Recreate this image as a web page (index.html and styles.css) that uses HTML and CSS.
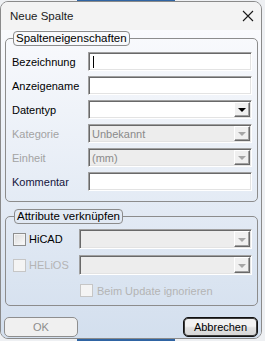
FILE: index.html
```html
<!DOCTYPE html>
<html lang="de">
<head>
  <meta charset="UTF-8" />
  <title>Neue Spalte</title>
  <link rel="stylesheet" href="styles.css">
</head>
<body>
  <div class="dialog">
    <div class="titlebar">
      <span class="title">Neue Spalte</span>
      <svg class="close" width="12" height="12" viewBox="0 0 12 12">
        <path d="M1 1 L11 11 M11 1 L1 11" stroke="#1a1a1a" stroke-width="1.1" fill="none" />
      </svg>
    </div>

    <div class="client">
      <fieldset class="group props">
        <legend>Spalteneigenschaften</legend>

        <label>Bezeichnung</label>
        <div class="field"><span class="caret"></span></div>

        <label>Anzeigename</label>
        <div class="field"></div>

        <label>Datentyp</label>
        <div class="field combo"><span class="drop"><i></i></span></div>

        <label class="off">Kategorie</label>
        <div class="field combo disabled"><span class="value">Unbekannt</span><span class="drop"><i></i></span></div>

        <label class="off">Einheit</label>
        <div class="field combo disabled"><span class="value">(mm)</span><span class="drop"><i></i></span></div>

        <label class="note">Kommentar</label>
        <div class="field"></div>
      </fieldset>

      <fieldset class="group links">
        <legend>Attribute verknüpfen</legend>

        <label class="check"><span class="box"></span>HiCAD</label>
        <div class="field combo disabled"><span class="drop"><i></i></span></div>

        <label class="check off"><span class="box"></span>HELiOS</label>
        <div class="field combo disabled"><span class="drop"><i></i></span></div>

        <label class="check off update"><span class="box"></span>Beim Update ignorieren</label>
      </fieldset>

      <div class="buttons">
        <button class="btn" disabled>OK</button>
        <button class="btn default">Abbrechen</button>
      </div>
    </div>
  </div>
</body>
</html>
```

FILE: styles.css
```css
* {
  box-sizing: border-box;
  margin: 0;
  padding: 0;
}
body {
  width: 265px;
  height: 341px;
  overflow: hidden;
  font-family: "Liberation Sans", Arial, sans-serif;
  font-size: 11px;
  color: #000;
  background:
    linear-gradient(#2f64a3, #2f64a3) 77px 0 / 98px 2px no-repeat,
    linear-gradient(#2f64a3, #2f64a3) 77px 339px / 98px 2px no-repeat,
    #eef0f3;
}
.dialog {
  width: 262px;
  height: 338px;
  margin-top: 1px;
  border: 1px solid #8a8a8a;
  border-radius: 8px;
  overflow: hidden;
  display: flex;
  flex-direction: column;
}
.titlebar {
  height: 28px;
  flex: none;
  display: flex;
  align-items: center;
  justify-content: space-between;
  padding: 0 7px 0 9px;
  background: #f3f3f3;
}
.title {
  font-size: 11.5px;
  color: #1b1b1b;
}
.client {
  flex: 1;
  padding: 1px 0 0 4px;
  background: linear-gradient(#f9fafd, #d3dfee);
}
.group {
  width: 253px;
  border: 1px solid #8c8c8c;
  border-radius: 5px;
  display: grid;
  align-items: center;
}
.group legend {
  margin-left: 1px;
  padding: 0 2px;
  height: 15px;
  line-height: 13px;
  font-size: 11.5px;
  border: 1px solid #8c8c8c;
  border-radius: 4px;
}
.props {
  grid-template-columns: 76px 164px;
  grid-auto-rows: 19px;
  row-gap: 5px;
  padding: 6px 5px 10px 6px;
}
.links {
  margin-top: 7px;
  grid-template-columns: 66px 173px;
  grid-auto-rows: 20px;
  row-gap: 6px;
  padding: 5px 5px 4px 7px;
}
label.off {
  color: #a3a3a3;
}
label.note {
  color: #14143c;
}
.field {
  position: relative;
  height: 100%;
  background: #fff;
  border: 1px solid;
  border-color: #a0a0a0 #fff #fff #a0a0a0;
  box-shadow: inset 1px 1px 0 #696969, inset -1px -1px 0 #e3e3e3;
  display: flex;
  align-items: center;
}
.field.disabled {
  background: #ededed;
}
.caret {
  width: 1px;
  height: 12px;
  margin-left: 4px;
  background: #000;
}
.value {
  padding-left: 3px;
  color: #8a8a8a;
}
.drop {
  position: absolute;
  right: 1px;
  top: 1px;
  bottom: 1px;
  width: 16px;
  background: #f0f0f0;
  border: 1px solid;
  border-color: #fff #696969 #696969 #fff;
  box-shadow: inset -1px -1px 0 #a0a0a0;
  display: flex;
  align-items: center;
  justify-content: center;
}
.drop i {
  width: 0;
  height: 0;
  border-left: 4px solid transparent;
  border-right: 4px solid transparent;
  border-top: 4px solid #000;
  margin-top: 1px;
}
.disabled .drop i {
  border-top-color: #a6a6a6;
}
.check {
  display: flex;
  align-items: center;
  gap: 3px;
}
.check.off {
  color: #b4b4b4;
}
.box {
  width: 13px;
  height: 13px;
  border: 1px solid #8e8f8f;
  background: linear-gradient(135deg, #dcdcdc, #fbfbfb);
  box-shadow: inset 0 0 0 1px #f4f4f4;
}
.off .box {
  border-color: #c6c6c6;
  background: #f4f4f4;
}
.update {
  grid-column: 2;
  margin: -1px 0 0 1px;
  gap: 4px;
  height: 14px;
}
.buttons {
  display: flex;
  justify-content: space-between;
  width: 254px;
  margin: 11px 0 0 -1px;
}
.btn {
  width: 74px;
  height: 20px;
  font-family: inherit;
  font-size: 11px;
  color: #000;
  border: 1px solid #707070;
  border-radius: 5px;
  background: linear-gradient(#f2f2f2 45%, #e0e0e0 55%, #d6d6d6);
}
.btn:disabled {
  color: #8d8d8d;
  border-color: #8e8e8e;
  background: #f0f0f0;
}
.btn.default {
  width: 75px;
  border-color: #111;
  box-shadow: inset 0 0 0 1px #3c3c3c;
}
```
